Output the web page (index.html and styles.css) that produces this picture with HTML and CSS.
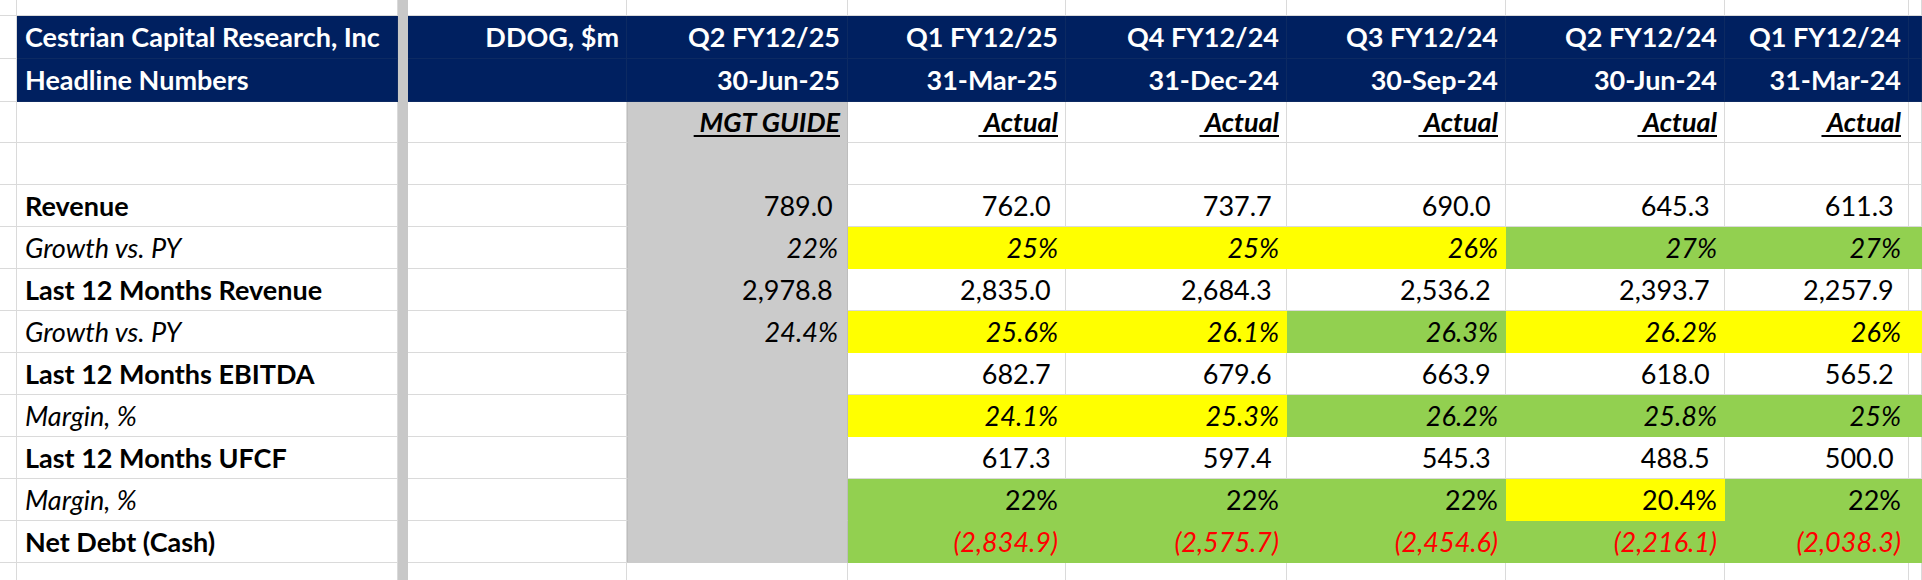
FILE: index.html
```html
<!DOCTYPE html>
<html lang="en">
<head>
<meta charset="utf-8">
<title>DDOG Headline Numbers</title>
<link rel="stylesheet" href="styles.css">
</head>
<body>
<div class="sheet">
  <div class="row top">
    <div class="c"></div><div class="c"></div><div class="bar"></div><div class="c"></div><div class="c"></div><div class="c"></div><div class="c"></div><div class="c"></div><div class="c"></div><div class="c"></div><div class="c"></div>
  </div>
  <div class="row hd">
    <div class="c"></div>
    <div class="c navy lbl">Cestrian Capital Research, Inc</div>
    <div class="bar"></div>
    <div class="c navy">DDOG, $m</div>
    <div class="c navy">Q2 FY12/25</div>
    <div class="c navy">Q1 FY12/25</div>
    <div class="c navy">Q4 FY12/24</div>
    <div class="c navy">Q3 FY12/24</div>
    <div class="c navy">Q2 FY12/24</div>
    <div class="c navy">Q1 FY12/24</div>
    <div class="c navy"></div>
  </div>
  <div class="row hd">
    <div class="c"></div>
    <div class="c navy lbl">Headline Numbers</div>
    <div class="bar"></div>
    <div class="c navy"></div>
    <div class="c navy">30-Jun-25</div>
    <div class="c navy">31-Mar-25</div>
    <div class="c navy">31-Dec-24</div>
    <div class="c navy">30-Sep-24</div>
    <div class="c navy">30-Jun-24</div>
    <div class="c navy">31-Mar-24</div>
    <div class="c navy"></div>
  </div>
  <div class="row h41">
    <div class="c"></div><div class="c lbl"></div><div class="bar"></div><div class="c"></div>
    <div class="c gray"><span class="u">&nbsp;MGT GUIDE</span></div>
    <div class="c"><span class="u">&nbsp;Actual</span></div>
    <div class="c"><span class="u">&nbsp;Actual</span></div>
    <div class="c"><span class="u">&nbsp;Actual</span></div>
    <div class="c"><span class="u">&nbsp;Actual</span></div>
    <div class="c"><span class="u">&nbsp;Actual</span></div>
    <div class="c"></div>
  </div>
  <div class="row">
    <div class="c"></div><div class="c lbl"></div><div class="bar"></div><div class="c"></div>
    <div class="c gray"></div><div class="c"></div><div class="c"></div><div class="c"></div><div class="c"></div><div class="c"></div><div class="c"></div>
  </div>
  <div class="row">
    <div class="c"></div><div class="c lbl b">Revenue</div><div class="bar"></div><div class="c"></div>
    <div class="c gray pos">789.0</div>
    <div class="c pos">762.0</div>
    <div class="c pos">737.7</div>
    <div class="c pos">690.0</div>
    <div class="c pos">645.3</div>
    <div class="c pos">611.3</div>
    <div class="c"></div>
  </div>
  <div class="row">
    <div class="c"></div><div class="c lbl i">Growth vs. PY</div><div class="bar"></div><div class="c"></div>
    <div class="c gray i pct">22%</div>
    <div class="c yel i">25%</div>
    <div class="c yel i">25%</div>
    <div class="c yel i">26%</div>
    <div class="c grn i">27%</div>
    <div class="c grn i">27%</div>
    <div class="c grn"></div>
  </div>
  <div class="row">
    <div class="c"></div><div class="c lbl b">Last 12 Months Revenue</div><div class="bar"></div><div class="c"></div>
    <div class="c gray pos">2,978.8</div>
    <div class="c pos">2,835.0</div>
    <div class="c pos">2,684.3</div>
    <div class="c pos">2,536.2</div>
    <div class="c pos">2,393.7</div>
    <div class="c pos">2,257.9</div>
    <div class="c"></div>
  </div>
  <div class="row">
    <div class="c"></div><div class="c lbl i">Growth vs. PY</div><div class="bar"></div><div class="c"></div>
    <div class="c gray i pct">24.4%</div>
    <div class="c yel i">25.6%</div>
    <div class="c yel i">26.1%</div>
    <div class="c grn i">26.3%</div>
    <div class="c yel i">26.2%</div>
    <div class="c yel i">26%</div>
    <div class="c yel"></div>
  </div>
  <div class="row">
    <div class="c"></div><div class="c lbl b">Last 12 Months EBITDA</div><div class="bar"></div><div class="c"></div>
    <div class="c gray"></div>
    <div class="c pos">682.7</div>
    <div class="c pos">679.6</div>
    <div class="c pos">663.9</div>
    <div class="c pos">618.0</div>
    <div class="c pos">565.2</div>
    <div class="c"></div>
  </div>
  <div class="row">
    <div class="c"></div><div class="c lbl i">Margin, %</div><div class="bar"></div><div class="c"></div>
    <div class="c gray"></div>
    <div class="c yel i">24.1%</div>
    <div class="c yel i">25.3%</div>
    <div class="c grn i">26.2%</div>
    <div class="c grn i">25.8%</div>
    <div class="c grn i">25%</div>
    <div class="c grn"></div>
  </div>
  <div class="row">
    <div class="c"></div><div class="c lbl b">Last 12 Months UFCF</div><div class="bar"></div><div class="c"></div>
    <div class="c gray"></div>
    <div class="c pos">617.3</div>
    <div class="c pos">597.4</div>
    <div class="c pos">545.3</div>
    <div class="c pos">488.5</div>
    <div class="c pos">500.0</div>
    <div class="c"></div>
  </div>
  <div class="row">
    <div class="c"></div><div class="c lbl i">Margin, %</div><div class="bar"></div><div class="c"></div>
    <div class="c gray"></div>
    <div class="c grn">22%</div>
    <div class="c grn">22%</div>
    <div class="c grn">22%</div>
    <div class="c yel">20.4%</div>
    <div class="c grn">22%</div>
    <div class="c grn"></div>
  </div>
  <div class="row">
    <div class="c"></div><div class="c lbl b">Net Debt (Cash)</div><div class="bar"></div><div class="c"></div>
    <div class="c gray"></div>
    <div class="c grn neg">(2,834.9)</div>
    <div class="c grn neg">(2,575.7)</div>
    <div class="c grn neg">(2,454.6)</div>
    <div class="c grn neg">(2,216.1)</div>
    <div class="c grn neg">(2,038.3)</div>
    <div class="c grn"></div>
  </div>
  <div class="row">
    <div class="c"></div><div class="c"></div><div class="bar"></div><div class="c"></div><div class="c"></div><div class="c"></div><div class="c"></div><div class="c"></div><div class="c"></div><div class="c"></div><div class="c"></div>
  </div>
</div>
</body>
</html>
```

FILE: styles.css
```css
:root {
  --cols: 17px 381px 10px 219px 221px 218px 221px 219px 219px 184px 1fr;
  --grid: #dadada;
  --navy: #002060;
}

* {
  box-sizing: border-box;
  margin: 0;
  padding: 0;
}

html, body {
  background: #ffffff;
}

body {
  width: 1922px;
  height: 580px;
  overflow: hidden;
  font-family: Lato, "Liberation Sans", sans-serif;
  font-size: 27px;
  line-height: 1.2;
  color: #000000;
}

.sheet {
  display: flex;
  flex-direction: column;
}

.row {
  display: grid;
  grid-template-columns: var(--cols);
  height: 42px;
  flex: none;
}

.row.top {
  height: 16px;
}

.row.hd {
  height: 43px;
}

.row.h41 {
  height: 41px;
}

.c {
  display: flex;
  align-items: flex-end;
  justify-content: flex-end;
  padding: 0 7px 4px 0;
  border-right: 1px solid var(--grid);
  border-bottom: 1px solid var(--grid);
  white-space: nowrap;
  overflow: hidden;
}

.lbl {
  justify-content: flex-start;
  padding-left: 8px;
}

.bar {
  background: #c8c8c8;
}

.navy {
  background: var(--navy);
  color: #ffffff;
  font-weight: 700;
  border-color: #0d2a62;
}

.hd .navy {
  padding-bottom: 5px;
}

.gray {
  background: #cbcbcb;
  border-color: #cbcbcb;
  border-right-color: #bdbdbd;
  box-shadow: inset 1px 0 0 #bdbdbd;
}

.yel {
  background: #ffff00;
  border-color: #ffff00;
}

.grn {
  background: #92d050;
  border-color: #92d050;
}

.b {
  font-weight: 700;
}

.i {
  font-style: italic;
}

.pct {
  padding-right: 9px;
}

.neg {
  color: #ff0000;
  font-style: italic;
}

.pos::after {
  content: ")";
  visibility: hidden;
}

.u {
  font-weight: 700;
  font-style: italic;
  text-decoration: underline;
  text-decoration-thickness: 2px;
  text-underline-offset: 3px;
  white-space: pre;
}
```
